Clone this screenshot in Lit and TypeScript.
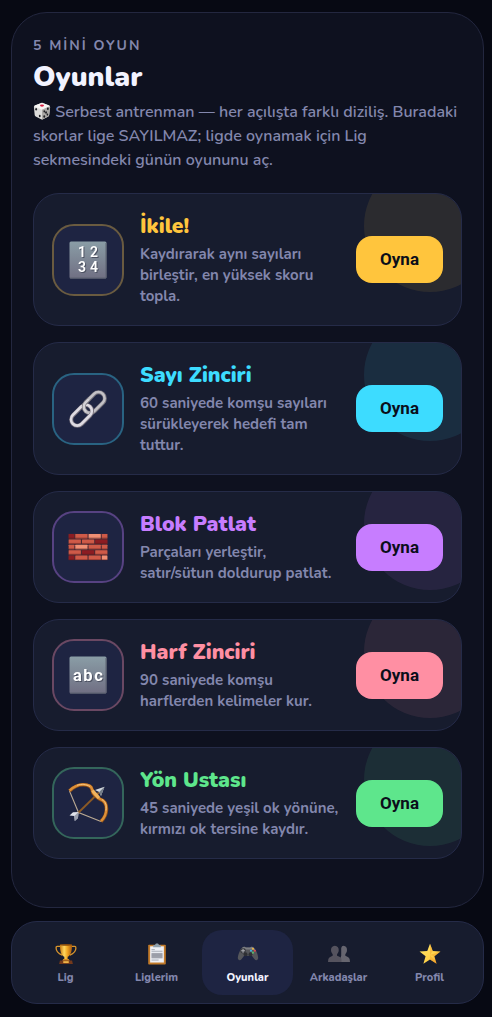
import { LitElement, html, svg, css } from "lit";
import { customElement, property } from "lit/decorators.js";

const keycap = (body: unknown) => svg`
  <defs>
    <linearGradient id="key" x1="0" y1="0" x2="0" y2="1">
      <stop offset="0" stop-color="#8a9da6" /><stop offset="1" stop-color="#706f83" />
    </linearGradient>
  </defs>
  <rect x="1.5" y="1.5" width="37" height="37" rx="1.5" fill="url(#key)" />
  <path d="M2 38h36V3" fill="none" stroke="#5c6270" stroke-width="1" />
  ${body}`;

const brick = (x: number, y: number, w: number, c: string) => svg`
  <rect x=${x} y=${y} width=${w} height="4.4" rx=".4" fill=${c} />
  <path d="M${x} ${y + 4}h${w}" stroke="#5a1c1c" stroke-opacity=".5" stroke-width=".8" />`;

const R = "#cf5a48", D = "#8c1c22", L = "#f08f74";
const bricks: [number, number, number, string][] = [
  [0.7, 7, 5.6, D], [7.3, 7, 12.2, R], [20.6, 7, 12.2, L], [33.8, 7, 5.6, R],
  [0.7, 12.4, 12.2, R], [14, 12.4, 12.2, R], [27.2, 12.4, 12.2, D],
  [0.7, 17.8, 5.6, R], [7.3, 17.8, 12.2, L], [20.6, 17.8, 12.2, R], [33.8, 17.8, 5.6, R],
  [0.7, 23.2, 12.2, R], [14, 23.2, 12.2, D], [27.2, 23.2, 12.2, R],
  [0.7, 28.6, 5.6, D], [7.3, 28.6, 12.2, R], [20.6, 28.6, 12.2, R], [33.8, 28.6, 5.6, L],
];

const icons: Record<string, unknown> = {
  numbers: keycap(svg`
    <g class="glyphs" font-family="Roboto, sans-serif" font-weight="600" font-size="14" fill="#fff" text-anchor="middle">
      <text x="14" y="17">1</text><text x="26" y="17">2</text>
      <text x="14" y="32">3</text><text x="26" y="32">4</text>
    </g>`),
  letters: keycap(svg`
    <g class="glyphs" font-family="Roboto, sans-serif" font-weight="700" font-size="16.5" fill="#fff" text-anchor="middle">
      <text x="9.500" y="25.500">a</text><text x="20" y="25.500">b</text><text x="30.500" y="25.500">c</text>
    </g>`),
  link: svg`
    <g fill="none" transform="rotate(-45 20 20)">
      <rect x="16.8" y="13.8" width="24.4" height="12.4" rx="6.2" stroke="#77747c" stroke-width="4" />
      <rect x="16.8" y="13.5" width="24.4" height="12.4" rx="6.2" stroke="#c3c1c6" stroke-width="2.600" />
      <rect x="-1.2" y="13.8" width="24.4" height="12.4" rx="6.2" stroke="#77717c" stroke-width="4" />
      <rect x="-1.2" y="13.5" width="24.4" height="12.4" rx="6.2" stroke="#dedbe2" stroke-width="2.600" />
      <path d="M16.800 21v-1a6.200 6.200 0 0 1 6.200-6.400h5" stroke="#77747c" stroke-width="4" />
      <path d="M16.800 21v-1a6.200 6.200 0 0 1 6.200-6.400h5" stroke="#d2d0d5" stroke-width="2.600" />
    </g>`,
  bricks: svg`<rect x=".5" y="6.8" width="39" height="26.4" fill="#4c2a33" />${bricks.map((b) => brick(...b))}`,
  bow: svg`
    <path d="M1.500 8 10.500 29.500 33 38.500" fill="none" stroke="#b9a892" stroke-width="1.100" />
    <path d="M9 31 31 9.500" stroke="#8c5a25" stroke-width="1.800" />
    <path d="M1.500 8C6 3.500 10 1.500 15.500 1.800c5 .2 8 1.500 8.500 4.700.3 2.500.8 4 3 6 1.500 1.500 3 3 5.500 4 4.500 1.500 6 4.500 6 9.500 0 5-2 9-5.500 12.500" fill="none" stroke="#8a4c18" stroke-width="3.600" stroke-linejoin="round" />
    <path d="M1.500 7.700C6 3.200 10 1.300 15.500 1.500c5 .2 8 1.500 8.500 4.700.3 2.500.8 4 3 6 1.500 1.500 3 3 5.500 4 4.500 1.500 5.800 4.500 5.800 9.500 0 5-1.800 9-5.300 12.500" fill="none" stroke="#dc8f38" stroke-width="2.400" />
    <path d="M9 2.300c5-1.600 9-1 13 1.200M34 16.500c4 2.500 4.700 6 4 11" fill="none" stroke="#f7c27a" stroke-width="1" />
    <path d="M24.500 7.500 31 15" stroke="#f1b45f" stroke-width="3.200" />
    <path d="M36.500 3.800 27 7l4.200 2 1.800 4z" fill="#d3d8dd" /><path d="M36.500 3.800 31.200 9l1.800 4z" fill="#737b86" />
    <path d="M10.500 29 5 29.300l-3.500 3.200 4.800.6.500 5 3.200-3.200z" fill="#e0e2ea" /><path d="m10.500 29-4.200 4.100.5 5 3.200-3.200z" fill="#9b9fae" />`,
  dice: svg`
    <path d="M20 1.500 36 8q2 1 2 3l-2 18q-.3 2-2 3l-12 6.500q-2 .8-4 0L6 32q-2-1-2.200-3L2 11q0-2 2-3z" fill="#dcdcda" />
    <path d="M20 1.500 36 8q1 1-1 2.500L20 17 5 10.500Q3 9 4 8z" fill="#f6f5f3" />
    <path d="m20 17 16-7q2 0 2 2l-2 17q-.3 2-2 3l-12 6.500-2 .5z" fill="#aaa8a5" />
    <ellipse cx="20" cy="8" rx="4.500" ry="2.500" fill="#d81f43" />
    <g fill="#1e1e22"><ellipse cx="7" cy="16" rx="2" ry="2.800" /><ellipse cx="15" cy="31" rx="2" ry="2.800" />
    <ellipse cx="33" cy="15" rx="2" ry="2.800" /><ellipse cx="29" cy="23.500" rx="2" ry="2.800" /><ellipse cx="25" cy="32" rx="2" ry="2.800" />
    <ellipse cx="32" cy="28" rx="1.800" ry="2.500" /><ellipse cx="25" cy="21" rx="1.800" ry="2.500" /></g>`,
  trophy: svg`
    <defs><linearGradient id="gold"><stop offset="0" stop-color="#c97a12" /><stop offset=".35" stop-color="#ffd75e" /><stop offset=".6" stop-color="#f2a824" /><stop offset="1" stop-color="#a9590c" /></linearGradient></defs>
    <path d="M10 6H4q-2 0-2 3c0 6 4 10 11 13M30 6h6q2 0 2 3c0 6-4 10-11 13" fill="none" stroke="#d7932c" stroke-width="2.400" />
    <path d="M9 3h22c0 12-2 19-8 22v5h-6v-5C11 22 9 15 9 3z" fill="url(#gold)" />
    <ellipse cx="20" cy="3.600" rx="11" ry="1.600" fill="#8a4c0c" />
    <path d="M15 29h10l2 4H13z" fill="#d48c22" /><path d="M9 32h22l1.500 6h-25z" fill="#74391b" /><rect x="15" y="33" width="10" height="3.500" fill="#eeb548" />`,
  clipboard: svg`
    <rect x="4" y="3" width="32" height="36" rx="1.500" fill="#c27a29" />
    <path d="M7.500 6h25v29.500h-25z" fill="#eef0f6" />
    <path d="M10 12h6M10 15h20M10 31h13" stroke="#8e93a0" stroke-width="1.300" />
    <path d="M10 18h20v10H10z" fill="#a7a9b3" />
    <path d="M10 20.500h20M10 23h20M10 25.500h20" stroke="#858995" stroke-width=".8" />
    <path d="M13 7.500V5q0-1.500 2-1.500h1.500C17 1.500 18 .8 20 .8s3 .7 3.500 2.700H25q2 0 2 1.500v2.500z" fill="#8fa0ad" />`,
  gamepad: svg`
    <path d="M10 8c2-2 5-1 6 0h8c1-1 4-2 6 0 4 3 8 12 8.500 19 .3 4-4 6-7 2l-4.500-6h-14L8.500 29c-3 4-7.300 2-7-2C2 20 6 11 10 8z" fill="#55565b" />
    <path d="M10 8c2-2 5-1 6 0h8c1-1 4-2 6 0 2 2 3 4 4 6-5-3-23-3-28 0 1-2 2-4 4-6z" fill="#7c7d82" />
    <circle cx="11" cy="14" r="5" fill="#3a3b40" /><path d="M11 10.500v7M7.500 14h7" stroke="#aaabb0" stroke-width="2" />
    <circle cx="15.500" cy="20.500" r="3.500" fill="#2e2f33" /><circle cx="24.500" cy="20.500" r="3.500" fill="#2e2f33" />
    <circle cx="29" cy="10.500" r="1.900" fill="#f2b53c" /><circle cx="32.500" cy="14" r="1.900" fill="#e2484f" />
    <circle cx="29" cy="17.500" r="1.900" fill="#57bd6d" /><circle cx="25.500" cy="14" r="1.900" fill="#42b4e0" />`,
  people: svg`
    <path d="M28 5c5 0 7 4 6.500 8.500-.3 3-1.500 5-3 6.500v3c4 1.500 7.500 3 8 7l.5 4.500H20L24 23V9q1-4 4-4z" fill="#66656f" />
    <path d="M12.500 5c5 0 7.500 4 7 8.500-.3 3-1.500 5-3 6.500v3c5 1.500 8 3 8 7v4.500H0L.5 30c.5-4 4-5.500 8-7v-3c-1.500-1.500-2.700-3.500-3-6.500C5 9 7.500 5 12.500 5z" fill="#55535e" />`,
  star: svg`
    <defs><linearGradient id="sun" x1="0" y1="0" x2="1" y2="1"><stop offset="0" stop-color="#ffe66b" /><stop offset=".6" stop-color="#ffd24a" /><stop offset="1" stop-color="#f08a1c" /></linearGradient></defs>
    <path d="m20 1.500 5 13 14 .8-11 8.700 4 13.700L20 30 8 37.700 12 24 1 15.300l14-.8z" fill="url(#sun)" />
    <path d="m20 1.500 5 13L20 22zM39 15.300 28 24l-8-2zM32 37.700 20 30v-8z" fill="#f3a32c" opacity=".5" />`,
};

const icon = (name: string) => html`<svg viewBox="0 0 40 40" aria-hidden="true">${icons[name]}</svg>`;

@customElement("game-card")
class GameCard extends LitElement {
  @property() name = "";
  @property() text = "";
  @property() icon = "";

  static styles = css`
    :host { display: block; }
    .card {
      position: relative; overflow: hidden; box-sizing: border-box;
      display: flex; align-items: center; gap: 16px; padding: 18px;
      border: 1px solid #252b48; border-radius: 26px; background: #171c2e;
    }
    .glow {
      position: absolute; top: -34px; right: -35px; width: 132px; height: 132px;
      border-radius: 50%; background: var(--accent); opacity: .09;
    }
    .tile {
      flex: none; box-sizing: border-box; width: 72px; height: 72px;
      display: grid; place-items: center; border-radius: 22px; background: #1e2442;
      border: 2px solid color-mix(in srgb, var(--accent) 34%, #1e2442);
    }
    .tile svg { width: 40px; height: 40px; overflow: visible; }
    .glyphs { filter: drop-shadow(1px 1px 0 #4d5262); }
    .info { flex: 1; min-width: 0; }
    .name { margin: 0 0 4px; color: var(--accent); font-size: 21px; line-height: 28px; font-weight: 900; }
    .text { margin: 0; color: #8387ad; font-size: 15px; line-height: 21px; font-weight: 700; }
    .play {
      position: relative; flex: none; border: 0; border-radius: 16px; padding: 13px 24px;
      background: var(--accent); color: #0b0e1a; font: 700 17px/21px Roboto, sans-serif; cursor: pointer;
    }
  `;

  render() {
    return html`<article class="card">
      <div class="glow"></div>
      <div class="tile">${icon(this.icon)}</div>
      <div class="info"><h2 class="name">${this.name}</h2><p class="text">${this.text}</p></div>
      <button class="play" type="button">Oyna</button>
    </article>`;
  }
}

@customElement("app-root")
class AppRoot extends LitElement {
  static styles = css`
    :host {
      display: flex; flex-direction: column; gap: 13px; box-sizing: border-box; min-height: 100vh;
      padding: 12px 8px 13px 11px; background: #070913;
      font-family: Nunito, "Open Sans", sans-serif; color: #8387ad;
    }
    .panel {
      flex: 1; box-sizing: border-box; padding: 24px 21px 48px;
      border: 1px solid #23273f; border-radius: 36px; background: #0e111f;
    }
    .eyebrow { margin: 0; font-size: 14px; line-height: 18px; font-weight: 700; letter-spacing: 2px; }
    .title { margin: 3px 0 4px; color: #f2f3ff; font-size: 28px; line-height: 38px; font-weight: 900; }
    .lead { margin: 0 0 21px; font-size: 16px; line-height: 24px; font-weight: 600; }
    .lead svg { width: 18px; height: 18px; vertical-align: -3px; }
    .games { display: flex; flex-direction: column; gap: 16px; }
    .amber { --accent: #ffc53d; }
    .cyan { --accent: #3ddcff; }
    .violet { --accent: #c77dff; }
    .rose { --accent: #ff8fa3; }
    .green { --accent: #5ee68c; }
    .tabs {
      display: grid; grid-template-columns: repeat(5, minmax(0, 1fr)); padding: 8px;
      border: 1px solid #252b48; border-radius: 26px; background: #171c2e;
    }
    .tab {
      display: flex; flex-direction: column; align-items: center; gap: 5px; padding: 13px 0 9px;
      border-radius: 20px; color: #8387ad; font-size: 11px; line-height: 16px; font-weight: 800; text-decoration: none;
    }
    .tab svg { width: 22px; height: 22px; }
    .tab[aria-current] { background: #1e2442; color: #f2f3ff; }
  `;

  private games = [
    ["amber", "numbers", "İkile!", "Kaydırarak aynı sayıları birleştir, en yüksek skoru topla."],
    ["cyan", "link", "Sayı Zinciri", "60 saniyede komşu sayıları sürükleyerek hedefi tam tuttur."],
    ["violet", "bricks", "Blok Patlat", "Parçaları yerleştir, satır/sütun doldurup patlat."],
    ["rose", "letters", "Harf Zinciri", "90 saniyede komşu harflerden kelimeler kur."],
    ["green", "bow", "Yön Ustası", "45 saniyede yeşil ok yönüne, kırmızı ok tersine kaydır."],
  ];

  render() {
    return html`
      <main class="panel">
        <p class="eyebrow">5 MİNİ OYUN</p>
        <h1 class="title">Oyunlar</h1>
        <p class="lead">${icon("dice")} Serbest antrenman — her açılışta farklı diziliş. Buradaki skorlar lige SAYILMAZ; ligde oynamak için Lig sekmesindeki günün oyununu aç.</p>
        <div class="games">
          ${this.games.map(([tone, glyph, name, text]) => html`
            <game-card class=${tone} .icon=${glyph} .name=${name} .text=${text}></game-card>`)}
        </div>
      </main>
      <nav class="tabs">
        <a class="tab" href="#lig">${icon("trophy")}Lig</a>
        <a class="tab" href="#liglerim">${icon("clipboard")}Liglerim</a>
        <a class="tab" href="#oyunlar" aria-current="page">${icon("gamepad")}Oyunlar</a>
        <a class="tab" href="#arkadaslar">${icon("people")}Arkadaşlar</a>
        <a class="tab" href="#profil">${icon("star")}Profil</a>
      </nav>`;
  }
}
